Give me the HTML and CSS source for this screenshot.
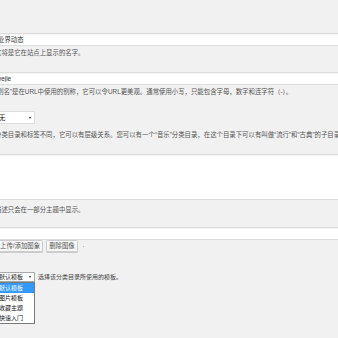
FILE: index.html
```html
<!DOCTYPE html>
<html lang="zh-CN">

<head>
    <meta charset="UTF-8">
    <meta name="viewport" content="width=device-width, initial-scale=1.0">
    <title>编辑分类目录</title>
    <link rel="stylesheet" href="styles.css">
</head>

<body>
    <div class="form">
        <!-- Name -->
        <div class="field">
            <input class="text-input" type="text" value="业界动态">
            <p class="description">这将是它在站点上显示的名字。</p>
        </div>

        <!-- Slug -->
        <div class="field">
            <input class="text-input" type="text" value="yejie">
            <p class="description">“别名”是在URL中使用的别称，它可以令URL更美观。通常使用小写，只能包含字母，数字和连字符（-）。</p>
        </div>

        <!-- Parent -->
        <div class="field">
            <div class="select select-parent">
                <span>无</span>
                <span class="arrow"></span>
            </div>
            <p class="description desc-parent">分类目录和标签不同，它可以有层级关系。您可以有一个“音乐”分类目录，在这个目录下可以有叫做“流行”和“古典”的子目录。</p>
        </div>

        <!-- Description -->
        <div class="field">
            <textarea class="textarea"></textarea>
            <p class="description desc-text">描述只会在一部分主题中显示。</p>
        </div>

        <!-- Image -->
        <div class="field field-image">
            <input class="text-input" type="text" value="">
            <div class="buttons">
                <button class="button">上传/添加图象</button>
                <button class="button">删除图像</button>
                <span class="spinner"></span>
            </div>
        </div>

        <!-- Template -->
        <div class="field field-template">
            <div class="select-wrap">
                <div class="select select-template">
                    <span>默认模板</span>
                    <span class="arrow"></span>
                </div>
                <ul class="dropdown">
                    <li class="selected">默认模板</li>
                    <li>图片模板</li>
                    <li>收藏主题</li>
                    <li>快速入门</li>
                </ul>
            </div>
            <span class="template-desc">选择该分类目录所使用的模板。</span>
        </div>
    </div>
</body>

</html>
```

FILE: styles.css
```css
/* General */
html {
    overflow: hidden;
}

body {
    margin: 0;
    min-height: 338px;
    background: #f1f1f1;
    color: #444;
    font-family: "Liberation Sans", "Noto Sans CJK SC", sans-serif;
    font-size: 6.4px;
    line-height: 9px;
}

.form {
    width: 420px;
    margin-left: -5px;
    padding-top: 33px;
}

.field {
    margin-top: 15px;
}

.field:first-child {
    margin-top: 0;
}

/* Inputs */
.text-input {
    display: block;
    box-sizing: border-box;
    width: 100%;
    height: 13px;
    margin: 0;
    padding: 0 0 0 2px;
    border: 1px solid #ddd;
    background: #fff;
    box-shadow: inset 0 1px 1px rgba(0, 0, 0, 0.05);
    font: inherit;
    color: #333;
    outline: none;
}

.textarea {
    display: block;
    box-sizing: border-box;
    width: 100%;
    height: 46px;
    margin: 0;
    padding: 2px 4px;
    border: 1px solid #ddd;
    background: #fff;
    box-shadow: inset 0 1px 1px rgba(0, 0, 0, 0.05);
    resize: none;
    outline: none;
}

.description {
    margin: 2px 0 0;
    color: #555;
    white-space: nowrap;
}

.desc-parent {
    margin-top: 6px;
}

.desc-text {
    margin-top: 5px;
}

/* Selects */
.select {
    box-sizing: border-box;
    width: 40px;
    display: flex;
    justify-content: space-between;
    align-items: center;
    background: #fff;
    color: #222;
}

.select-parent {
    height: 13px;
    padding: 0 3px 0 3px;
    border: 1px solid #ddd;
}

.arrow {
    width: 0;
    height: 0;
    border-left: 1.5px solid transparent;
    border-right: 1.5px solid transparent;
    border-top: 2.5px solid #222;
}

/* Image buttons */
.field-image {
    margin-top: 13px;
}

.buttons {
    display: flex;
    align-items: center;
    gap: 3px;
    padding-left: 2px;
}

.button {
    height: 12px;
    margin: 0;
    padding: 0 2px;
    border: 1px solid #ccc;
    border-radius: 1.5px;
    background: #f7f7f7;
    box-shadow: 0 1px 0 #ccc;
    font: inherit;
    color: #555;
    line-height: 10px;
}

.spinner {
    width: 1px;
    height: 1px;
    margin-left: 2px;
    background: #bbb;
}

/* Template */
.field-template {
    margin-top: 20px;
    display: flex;
    align-items: center;
    gap: 3px;
    font-size: 6px;
}

.select-wrap {
    position: relative;
}

.select-template {
    height: 10px;
    padding: 0 3px 0 3px;
    border: 1px solid #a9a9a9;
}

.dropdown {
    position: absolute;
    top: 100%;
    left: 0;
    box-sizing: border-box;
    width: 40px;
    margin: 0;
    padding: 0;
    list-style: none;
    background: #fff;
    border: 1px solid #7a7a7a;
    color: #111;
}

.dropdown li {
    height: 10px;
    padding-left: 3px;
    line-height: 10px;
}

.dropdown .selected {
    background: #3399ff;
    color: #fff;
}

.template-desc {
    color: #444;
}
```
